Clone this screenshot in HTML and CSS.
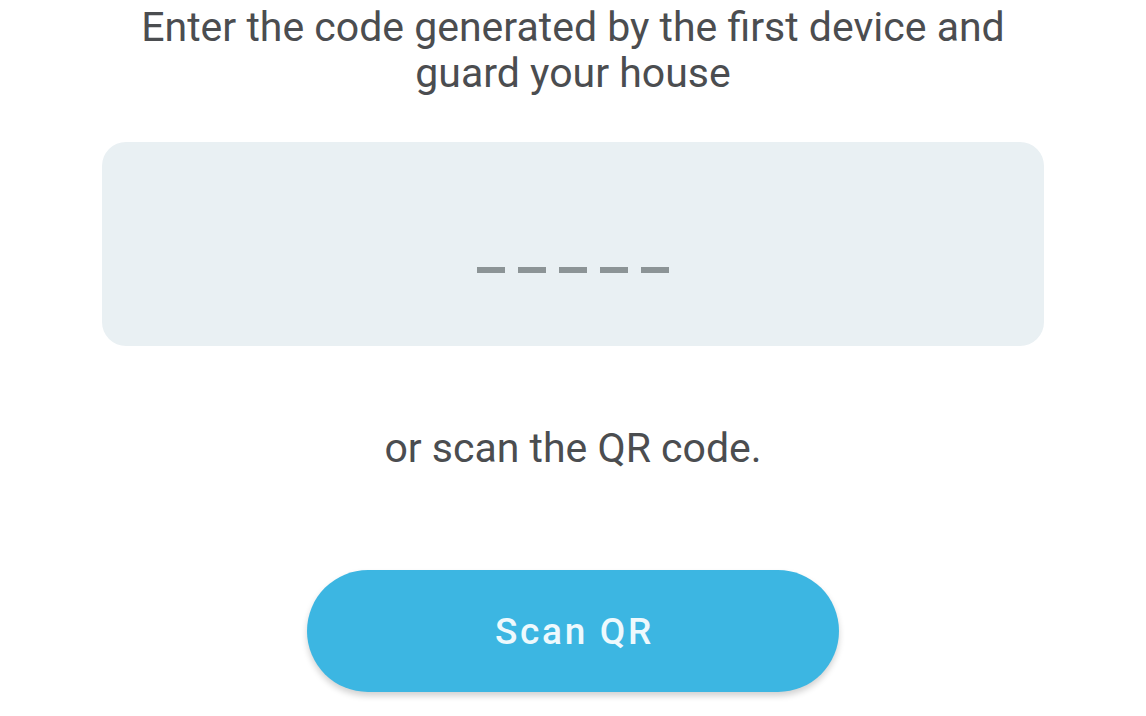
FILE: index.html
```html
<!DOCTYPE html>
<html>
<head>
  <meta charset="utf-8">
  <title>Pair device</title>
  <link rel="stylesheet" href="styles.css">
</head>
<body>
  <div class="screen">
    <p class="prompt">Enter the code generated by the first device and<br>guard your house</p>

    <div class="code-box">
      <div class="code-slots">
        <span class="slot"></span>
        <span class="slot"></span>
        <span class="slot"></span>
        <span class="slot"></span>
        <span class="slot"></span>
      </div>
    </div>

    <p class="alt">or scan the QR code.</p>

    <button class="scan-btn">Scan QR</button>
  </div>
</body>
</html>
```

FILE: styles.css
```css
html, body {
  margin: 0;
  padding: 0;
  background-color: #fff;
}
body {
  font-family: Roboto, "Noto Sans", sans-serif;
  color: #4b4d50;
}
.screen {
  width: 1146px;
  height: 716px;
  display: flex;
  flex-direction: column;
  align-items: center;
  overflow: hidden;
}
.prompt {
  margin: 0;
  padding-top: 4px;
  font-size: 41px;
  line-height: 46px;
  text-align: center;
}
.code-box {
  margin-top: 46px;
  width: 942px;
  height: 204px;
  border-radius: 24px;
  background-color: #e9f0f3;
  display: flex;
  align-items: center;
  justify-content: center;
}
.code-slots {
  display: flex;
  gap: 13px;
  margin-top: 52px;
}
.slot {
  width: 28px;
  height: 6px;
  background-color: #8c9496;
}
.alt {
  margin: 79px 0 0;
  font-size: 41px;
  line-height: 46px;
}
.scan-btn {
  margin-top: 99px;
  width: 532px;
  height: 122px;
  border: none;
  border-radius: 61px;
  background-color: #3cb6e2;
  color: #eef9fd;
  font-family: Roboto, "Noto Sans", sans-serif;
  font-size: 37px;
  font-weight: 500;
  letter-spacing: 2.7px;
  padding: 0 0 0 3px;
  box-shadow: 0 4px 6px rgba(0,0,0,0.18);
  cursor: pointer;
}
```
